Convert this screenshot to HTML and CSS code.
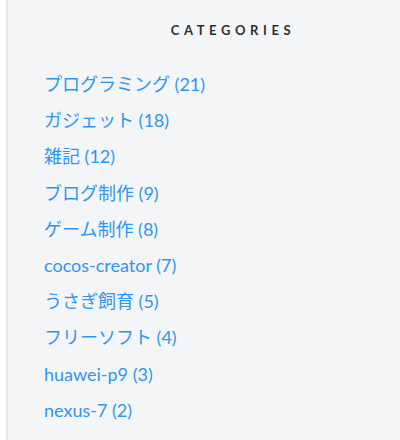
FILE: index.html
```html
<!DOCTYPE html>
<html lang="ja">
<head>
<meta charset="utf-8">
<link rel="stylesheet" href="styles.css">
</head>
<body>
<aside class="sidebar">
  <section class="widget">
    <h2 class="widget-title">Categories</h2>
    <ul class="cat-list">
      <li><a href="#">プログラミング</a> (21)</li>
      <li><a href="#">ガジェット</a> (18)</li>
      <li><a href="#">雑記</a> (12)</li>
      <li><a href="#">ブログ制作</a> (9)</li>
      <li><a href="#">ゲーム制作</a> (8)</li>
      <li><a href="#">cocos-creator</a> (7)</li>
      <li><a href="#">うさぎ飼育</a> (5)</li>
      <li><a href="#">フリーソフト</a> (4)</li>
      <li><a href="#">huawei-p9</a> (3)</li>
      <li><a href="#">nexus-7</a> (2)</li>
    </ul>
  </section>
</aside>
</body>
</html>
```
FILE: styles.css
```css
html, body {
  margin: 0;
  padding: 0;
  background: #ffffff;
  height: 100%;
}
body {
  font-family: Lato, "Noto Sans CJK JP", sans-serif;
}
.sidebar {
  margin-left: 6px;
  border-left: 2px solid #e4e6ea;
  background: #f4f5f7;
  min-height: 440px;
  box-sizing: border-box;
  padding: 20px 0 0 36px;
}
.widget-title {
  margin: 0;
  text-align: center;
  padding-left: 22px;
  font-size: 13px;
  font-weight: 700;
  letter-spacing: 4.6px;
  text-transform: uppercase;
  color: #2f2f33;
  line-height: 20px;
}
.cat-list {
  list-style: none;
  margin: 26px 0 0;
  padding: 0;
  font-size: 18px;
  color: #2f95f2;
}
.cat-list li {
  line-height: 36.2px;
}
.cat-list a {
  color: #2f95f2;
  text-decoration: none;
}
```
